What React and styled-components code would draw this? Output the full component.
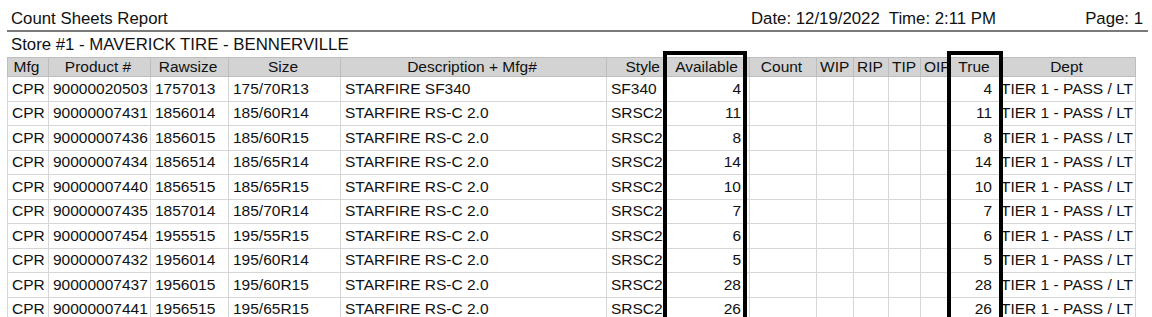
import React from "react"
import styled, { createGlobalStyle } from "styled-components"

const GlobalStyle = createGlobalStyle`
  html, body {
    margin: 0;
    padding: 0;
    background: #ffffff;
    overflow: hidden;
  }
  body {
    font-family: "Liberation Sans", Arial, sans-serif;
    color: #111;
  }
`

const Page = styled.div`
  position: relative;
  width: 1152px;
  height: 317px;
  overflow: hidden;
  padding-left: 7px;
  box-sizing: border-box;
`

const Report = styled.div`
  width: 1141px;
`

const TopBar = styled.div`
  display: grid;
  grid-template-columns: 1fr auto 152px;
  align-items: center;
  height: 32px;
  padding-top: 8px;
  box-sizing: border-box;
  border-bottom: 2px solid #7a7a7a;
  font-size: 16.8px;
`

const Title = styled.div`
  padding-left: 4px;
`

const Stamp = styled.div`
  white-space: pre;
`

const PageNo = styled.div`
  text-align: right;
  padding-right: 5px;
`

const Store = styled.div`
  font-size: 16.8px;
  height: 25px;
  line-height: 26px;
  padding-left: 4px;
`

const Table = styled.table`
  border-collapse: collapse;
  table-layout: fixed;
  width: 1128px;
  font-size: 15.5px;
`

const Head = styled.th`
  background: #d3d3d3;
  border: 1px solid #bdbdbd;
  font-weight: normal;
  height: 17px;
  line-height: 18px;
  padding: 0 6px 0 3px;
  text-align: ${(p) => p.align || "center"};
  white-space: nowrap;
  overflow: hidden;
`

const Cell = styled.td`
  border: 1px solid #d6d6d6;
  height: 23.5px;
  line-height: 18px;
  padding: 0 ${(p) => (p.align === "right" ? "8px" : "3px")} 0
    ${(p) => (p.tight ? "0" : "4px")};
  text-align: ${(p) => p.align || "left"};
  white-space: nowrap;
  overflow: hidden;
`

const Marker = styled.div`
  position: absolute;
  top: 51px;
  height: 270px;
  border: 4px solid #000;
  box-sizing: border-box;
  pointer-events: none;
`

const columns = [
  { key: "mfg", label: "Mfg", width: 41 },
  { key: "product", label: "Product #", width: 102 },
  { key: "raw", label: "Rawsize", width: 78 },
  { key: "size", label: "Size", width: 112 },
  { key: "desc", label: "Description + Mfg#", width: 266 },
  { key: "style", label: "Style", width: 60, headAlign: "right" },
  { key: "avail", label: "Available", width: 83, align: "right" },
  { key: "count", label: "Count", width: 67 },
  { key: "wip", label: "WIP", width: 37 },
  { key: "rip", label: "RIP", width: 35 },
  { key: "tip", label: "TIP", width: 32 },
  { key: "oip", label: "OIP", width: 30, headAlign: "left" },
  { key: "true", label: "True", width: 50, align: "right" },
  { key: "dept", label: "Dept", width: 135, tight: true },
]

const items = [
  ["90000020503", "1757013", "175/70R13", "STARFIRE SF340", "SF340", 4],
  ["90000007431", "1856014", "185/60R14", "STARFIRE RS-C 2.0", "SRSC2", 11],
  ["90000007436", "1856015", "185/60R15", "STARFIRE RS-C 2.0", "SRSC2", 8],
  ["90000007434", "1856514", "185/65R14", "STARFIRE RS-C 2.0", "SRSC2", 14],
  ["90000007440", "1856515", "185/65R15", "STARFIRE RS-C 2.0", "SRSC2", 10],
  ["90000007435", "1857014", "185/70R14", "STARFIRE RS-C 2.0", "SRSC2", 7],
  ["90000007454", "1955515", "195/55R15", "STARFIRE RS-C 2.0", "SRSC2", 6],
  ["90000007432", "1956014", "195/60R14", "STARFIRE RS-C 2.0", "SRSC2", 5],
  ["90000007437", "1956015", "195/60R15", "STARFIRE RS-C 2.0", "SRSC2", 28],
  ["90000007441", "1956515", "195/65R15", "STARFIRE RS-C 2.0", "SRSC2", 26],
]

const rows = items.map(([product, raw, size, desc, style, qty]) => ({
  mfg: "CPR",
  product,
  raw,
  size,
  desc,
  style,
  avail: qty,
  count: "",
  wip: "",
  rip: "",
  tip: "",
  oip: "",
  true: qty,
  dept: "TIER 1 - PASS / LT",
}))

const App = () => {
  return (
    <Page>
      <GlobalStyle />
      <Report>
        <TopBar>
          <Title>Count Sheets Report</Title>
          <Stamp>Date: 12/19/2022  Time: 2:11 PM</Stamp>
          <PageNo>Page: 1</PageNo>
        </TopBar>
        <Store>Store #1 - MAVERICK TIRE - BENNERVILLE</Store>
        <Table>
          <colgroup>
            {columns.map((c) => (
              <col key={c.key} style={{ width: c.width }} />
            ))}
          </colgroup>
          <thead>
            <tr>
              {columns.map((c) => (
                <Head key={c.key} align={c.headAlign}>
                  {c.label}
                </Head>
              ))}
            </tr>
          </thead>
          <tbody>
            {rows.map((r) => (
              <tr key={r.product}>
                {columns.map((c) => (
                  <Cell key={c.key} align={c.align} tight={c.tight}>
                    {r[c.key]}
                  </Cell>
                ))}
              </tr>
            ))}
          </tbody>
        </Table>
      </Report>
      {/* highlight boxes drawn over the Available and True columns */}
      <Marker style={{ left: 663, width: 84 }} />
      <Marker style={{ left: 947, width: 56 }} />
    </Page>
  )
}

export default App
